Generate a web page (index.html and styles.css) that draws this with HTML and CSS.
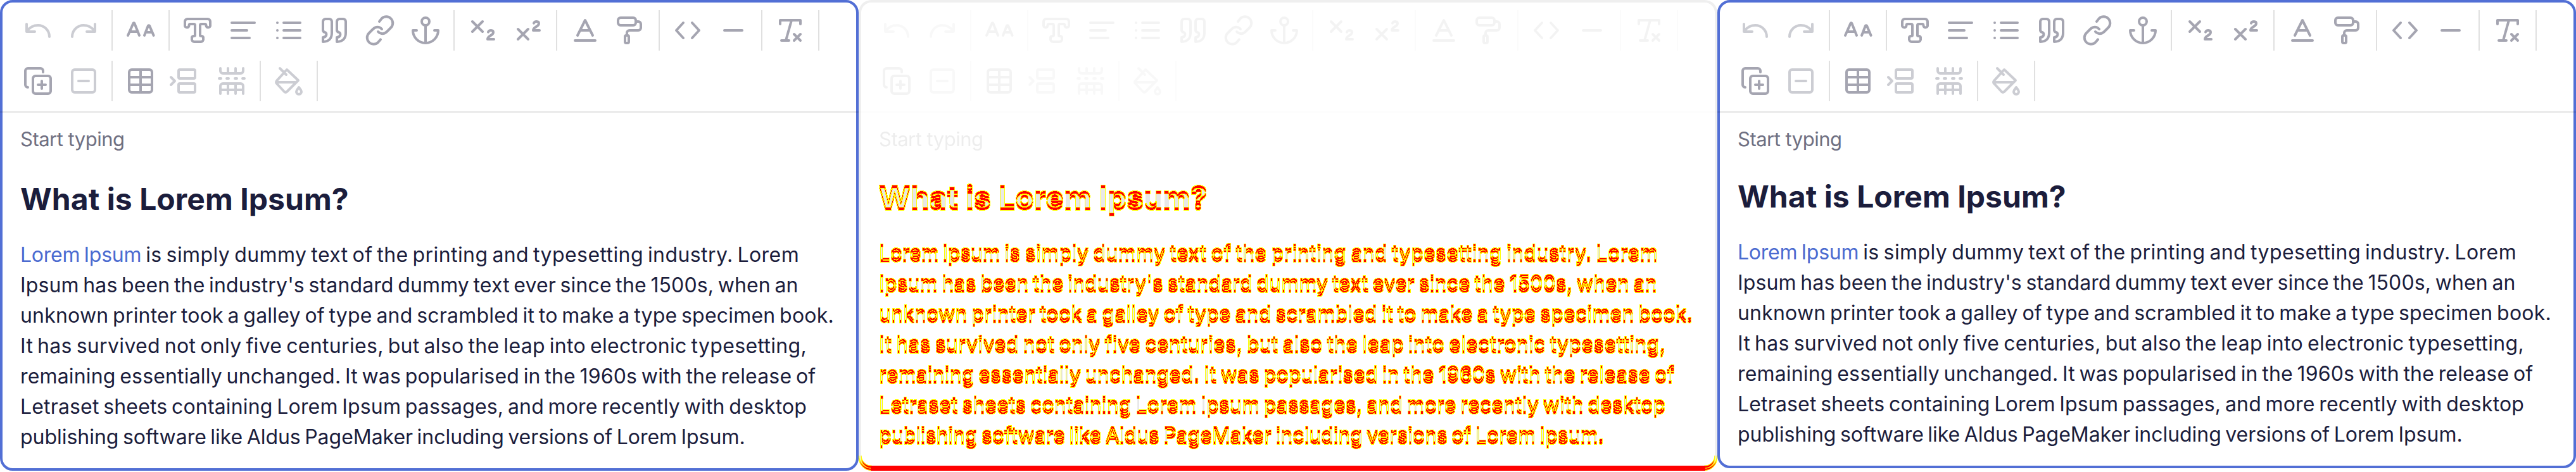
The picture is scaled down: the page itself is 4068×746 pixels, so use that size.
FILE: index.html
```html
<!DOCTYPE html>
<html lang="en">
<head>
<meta charset="utf-8">
<title>Editor comparison</title>
<link rel="stylesheet" href="styles.css">
</head>
<body>
<svg class="defs" aria-hidden="true">
  <defs>
    <filter id="shift-diff" x="-20" y="-20" width="1400" height="500" filterUnits="userSpaceOnUse" color-interpolation-filters="sRGB">
      <feOffset in="SourceAlpha" dy="-4" result="moved"/>
      <feComposite in="SourceAlpha" in2="moved" operator="in" result="common"/>
      <feFlood flood-color="#e8e8e8"/>
      <feComposite in2="common" operator="in" result="faded"/>
      <feComposite in="SourceAlpha" in2="moved" operator="xor" result="changed"/>
      <feComponentTransfer in="changed" result="soft"><feFuncA type="linear" slope="20" intercept="-4"/></feComponentTransfer>
      <feComponentTransfer in="changed" result="solid"><feFuncA type="linear" slope="20" intercept="-12"/></feComponentTransfer>
      <feMorphology in="solid" operator="dilate" radius="1" result="wide"/>
      <feMerge result="edge"><feMergeNode in="soft"/><feMergeNode in="wide"/></feMerge>
      <feFlood flood-color="#ffff00"/>
      <feComposite in2="edge" operator="in" result="yellow"/>
      <feFlood flood-color="#ff0000"/>
      <feComposite in2="solid" operator="in" result="red"/>
      <feMerge><feMergeNode in="faded"/><feMergeNode in="yellow"/><feMergeNode in="red"/></feMerge>
    </filter>
    <symbol id="undo" viewBox="0 0 24 24"><path d="M3 7v6h6.500M3.500 12.500C5.500 9.500 8.500 8 12 8c5 0 9 4 9 9"/></symbol>
    <symbol id="redo" viewBox="0 0 24 24"><path d="M21 7v6h-6.500M20.500 12.500C18.500 9.500 15.500 8 12 8c-5 0-9 4-9 9"/></symbol>
    <symbol id="case" viewBox="0 0 24 24"><path d="M2 16 6.300 6.300a.500.500 0 0 1 .800 0L11 16M3.500 13h6M15 16 18 8.300a.700.700 0 0 1 1 0L22.300 16M16 13.500h5"/></symbol>
    <symbol id="type" viewBox="0 0 24 24"><path d="M4 3h16a2 2 0 0 1 2 2v3.500a1.700 1.700 0 0 1-3 .500c-.500-.800 0-2-1-2h-3a1 1 0 0 0-1 1v8c0 1 2 0 2.500 1.500V18.500a2 2 0 0 1-2 2.500h-5a2 2 0 0 1-2-2.500v-1C8 16 10 17 10 16V8a1 1 0 0 0-1-1H6C5 7 5.500 8.200 5 9a1.700 1.700 0 0 1-3-.500V5a2 2 0 0 1 2-2Z"/></symbol>
    <symbol id="align" viewBox="0 0 24 24"><path d="M3 6h18M3 12h12M3 18h14"/></symbol>
    <symbol id="list" viewBox="0 0 24 24"><path d="M3 6h.01M8 6h13M3 12h.01M8 12h13M3 18h.01M8 18h13"/></symbol>
    <symbol id="quote" viewBox="0 0 24 24"><path d="M5 3h3a2 2 0 0 1 2 2v9c0 4-2 7-7 7v-3.500c3 0 3.500-3.500 1.500-4A2 2 0 0 1 3 12V5a2 2 0 0 1 2-2ZM16 3h3a2 2 0 0 1 2 2v9c0 4-2 7-7 7v-3.500c3 0 3.500-3.500 1.500-4A2 2 0 0 1 14 12V5a2 2 0 0 1 2-2Z"/></symbol>
    <symbol id="link" viewBox="0 0 24 24"><path d="M10.500 13c2 2.200 5 2 7 0l3-3a5 5 0 0 0-7-7.500L11.500 5M13.500 11c-2-2.200-5-2-7 0l-3 3a5 5 0 0 0 7 7.500l2-2.300"/></symbol>
    <symbol id="anchor" viewBox="0 0 24 24"><circle cx="12" cy="5" r="3"/><path d="M12 8v14M5 12H2c0 5.500 4.500 10 10 10s10-4.500 10-10h-3"/></symbol>
    <symbol id="sub" viewBox="0 0 24 24"><path d="m4 5 8 8M12 5l-8 8M21 19h-5c0-3 4.500-2.700 4.500-5.500 0-1.900-3.300-2-4-.200"/></symbol>
    <symbol id="sup" viewBox="0 0 24 24"><path d="m4 11 8 8M12 11l-8 8M21 12h-5c0-3 4.500-2.700 4.500-5.500 0-1.900-3.300-2-4-.200"/></symbol>
    <symbol id="color" viewBox="0 0 24 24"><path d="M4 20h16M6 16 12 4l6 12M8 12h8"/></symbol>
    <symbol id="roller" viewBox="0 0 24 24"><rect x="2" y="2" width="14" height="6" rx="2"/><path d="M16 5h2a2 2 0 0 1 2 2v3a2 2 0 0 1-2 2h-7a2 2 0 0 0-2 2v2"/><rect x="7.500" y="16" width="3" height="6" rx="1"/></symbol>
    <symbol id="code" viewBox="0 0 24 24"><path d="m8.500 6-5.500 6 5.500 6M15.500 6l5.500 6-5.500 6"/></symbol>
    <symbol id="rule" viewBox="0 0 24 24"><path d="M5 12h14"/></symbol>
    <symbol id="clear" viewBox="0 0 24 24"><path d="M4 7V4h16v3M13 4 8.500 20M5 20h6M15 15l5 5M20 15l-5 5"/></symbol>
    <symbol id="copy" viewBox="0 0 24 24"><rect x="8" y="8" width="14" height="14" rx="2"/><path d="M4 17a2 2 0 0 1-2-2V4a2 2 0 0 1 2-2h10a2 2 0 0 1 2 2v1M15 12v6M12 15h6"/></symbol>
    <symbol id="minus" viewBox="0 0 24 24"><rect x="3" y="3" width="18" height="18" rx="2"/><path d="M8 12h8"/></symbol>
    <symbol id="table" viewBox="0 0 24 24"><rect x="3" y="3" width="18" height="18" rx="2"/><path d="M12 3v18M3 9h18M3 15h18"/></symbol>
    <symbol id="cells" viewBox="0 0 24 24"><rect x="6" y="3" width="13" height="7" rx="1"/><rect x="6" y="14" width="13" height="7" rx="1"/><path d="m0 9 3 3-3 3"/></symbol>
    <symbol id="split" viewBox="0 0 24 24"><path d="M3 2v2a2 2 0 0 0 2 2h14a2 2 0 0 0 2-2V2M9 2v4M15 2v4M2 10h1.500M8 10h1.500M14.500 10H16M20.500 10H22M3 22v-6a2 2 0 0 1 2-2h14a2 2 0 0 1 2 2v6M9 14v8M15 14v8M3 19h18"/></symbol>
    <symbol id="fill" viewBox="0 0 24 24"><path d="m5 2 5 5M10.500 3l9 8.500-9 9a1.500 1.500 0 0 1-2 0l-6-6.500a1.500 1.500 0 0 1 0-2.200ZM2 13h15"/><path d="M20 17c-1 1.500-2 2.400-2 3.500a2 2 0 0 0 4 0c0-1.100-1-2-2-3.500Z"/></symbol>
  </defs>
</svg>
<main class="compare" id="compare">
  <section class="panel before"></section>
  <section class="panel diff"></section>
  <section class="panel after"></section>
</main>
<script src="app.js"></script>
</body>
</html>
```
FILE: styles.css
```css
* { box-sizing: border-box; }
body { margin: 0; background: #fff; font-family: Inter, "Open Sans", sans-serif; }
.defs { position: absolute; width: 0; height: 0; }
.compare { display: flex; align-items: flex-start; height: 746px; overflow: hidden; }
.panel { position: relative; width: 1356px; height: 744px; flex: none; }
.panel.after { height: 740px; }
.frame { position: absolute; inset: 0; border: 4px solid #526fd5; border-radius: 20px; }
.diff .frame { border-color: #efefef; border-bottom: 0; border-radius: 20px 20px 0 0; bottom: 24px; }
.toolbar { position: relative; height: 178px; padding: 16px; border-bottom: 2px solid rgba(0, 0, 0, .11); display: flex; flex-direction: column; gap: 16px; }
.row { display: flex; height: 64px; }
.group { display: flex; padding: 0 8px; border-right: 2px solid #e0e0e0; }
.tool { width: 72px; height: 64px; display: grid; place-items: center; color: #a5a5b1; }
.tool.off { color: #cccdd3; }
.tool svg { width: 48px; height: 48px; fill: none; stroke: currentColor; stroke-width: 2; stroke-linecap: round; stroke-linejoin: round; overflow: visible; }
symbol { overflow: visible; }
.hint { margin: 22px 0 0 32px; height: 40px; line-height: 40px; font-size: 31px; color: #6f7082; white-space: nowrap; }
.copy { padding: 0 32px; color: #1b1d3c; white-space: nowrap; }
.title { margin: 39px 0 0; font-size: 48px; line-height: 72px; font-weight: 700; height: 72px; }
.text { margin: 28px 0 0; font-size: 32px; line-height: 48px; word-spacing: -2.5px; }
.line { display: block; height: 48px; }
.fit { display: inline-block; }
.link { color: #4b6bd0; letter-spacing: -.25px; }
.after .copy { margin-top: -4px; }
.diff .toolbar, .diff .hint { opacity: .12; filter: grayscale(1); }
.diff .copy { filter: url(#shift-diff); }
.diff .link { color: inherit; }
.floor { position: absolute; left: 0; bottom: 0; width: 1356px; height: 28px; overflow: visible; }
```
FILE: app.js
```js
const rows = [
  [['undo-', 'redo-'], ['case'], ['type', 'align', 'list', 'quote', 'link', 'anchor'], ['sub', 'sup'], ['color', 'roller'], ['code', 'rule'], ['clear']],
  [['copy', 'minus-'], ['table', 'cells-', 'split-'], ['fill-']]
];
// Each line of copy with the width it occupies.
const lines = [
  ['<span class="link">Lorem Ipsum</span> is simply dummy text of the printing and typesetting industry. Lorem', 1230],
  ["Ipsum has been the industry's standard dummy text ever since the 1500s, when an", 1229],
  ['unknown printer took a galley of type and scrambled it to make a type specimen book.', 1285],
  ['It has survived not only five centuries, but also the leap into electronic typesetting,', 1242],
  ['remaining essentially unchanged. It was popularised in the 1960s with the release of', 1256],
  ['Letraset sheets containing Lorem Ipsum passages, and more recently with desktop', 1242],
  ['publishing software like Aldus PageMaker including versions of Lorem Ipsum.', 1145]
];
const tool = n => `<span class="tool${n.endsWith('-') ? ' off' : ''}"><svg><use href="#${n.replace('-', '')}" width="48" height="48"/></svg></span>`;
const toolbar = rows.map(r => `<div class="row">${r.map(g => `<div class="group">${g.map(tool).join('')}</div>`).join('')}</div>`).join('');
// Bottom corner: the two rounded borders, offset by 4px, and the crescents between them.
const corner = `<path d="M0 4V8A20 20 0 0 0 20 28V20A16 16 0 0 1 4 4Z" fill="#efefef"/>
  <g fill="#f00" stroke="#ff0" stroke-width="1.2"><path d="M.5 4V8A20 20 0 0 0 20 27.500V24A20 20 0 0 1 .5 4Z"/><path d="M4 4V8A16 16 0 0 0 20 24V20A16 16 0 0 1 4 4Z"/></g>`;
const floor = `<svg class="floor" viewBox="0 0 1356 28">${corner}<g transform="translate(1356 0) scale(-1 1)">${corner}</g><path d="M19 20H1337V28H19Z" fill="#f00"/></svg>`;

document.querySelectorAll('.panel').forEach(p => {
  p.innerHTML = `<div class="frame"></div><div class="toolbar">${toolbar}</div>
    <p class="hint"><span class="fit" data-w="165">Start typing</span></p>
    <div class="copy"><h1 class="title"><span class="fit" data-w="519">What is Lorem Ipsum?</span></h1>
    <p class="text">${lines.map(([t, w]) => `<span class="line"><span class="fit" data-w="${w}">${t}</span></span>`).join('')}</p></div>
    ${p.classList.contains('diff') ? floor : ''}`;
});
document.querySelectorAll('.fit').forEach(e => {
  // The link keeps its own tracking, so only the remaining letters are adjusted.
  const link = e.querySelector('.link');
  const n = e.textContent.length - (link ? link.textContent.length : 0);
  e.style.letterSpacing = (e.dataset.w - e.offsetWidth) / n + 'px';
});
```
